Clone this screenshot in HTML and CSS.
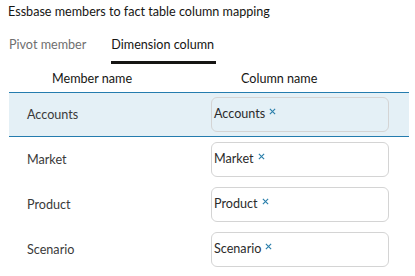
FILE: index.html
```html
<!DOCTYPE html>
<html lang="en">
<head>
  <meta charset="UTF-8" />
  <title>Column mapping</title>
  <link rel="stylesheet" href="styles.css">
</head>
<body>
  <h1 class="title">Essbase members to fact table column mapping</h1>

  <div class="tabs">
    <div class="tab">Pivot member</div>
    <div class="tab active">Dimension column</div>
  </div>

  <table class="mapping">
    <thead>
      <tr>
        <th class="col-member">Member name</th>
        <th class="col-column">Column name</th>
      </tr>
    </thead>
    <tbody>
      <tr class="selected">
        <td class="member">Accounts</td>
        <td><div class="chip-input"><span class="chip">Accounts <svg class="remove" viewBox="0 0 8 8"><path d="M1 1L7 7M7 1L1 7"/></svg></span></div></td>
      </tr>
      <tr>
        <td class="member">Market</td>
        <td><div class="chip-input"><span class="chip">Market <svg class="remove" viewBox="0 0 8 8"><path d="M1 1L7 7M7 1L1 7"/></svg></span></div></td>
      </tr>
      <tr>
        <td class="member">Product</td>
        <td><div class="chip-input"><span class="chip">Product <svg class="remove" viewBox="0 0 8 8"><path d="M1 1L7 7M7 1L1 7"/></svg></span></div></td>
      </tr>
      <tr>
        <td class="member">Scenario</td>
        <td><div class="chip-input"><span class="chip">Scenario <svg class="remove" viewBox="0 0 8 8"><path d="M1 1L7 7M7 1L1 7"/></svg></span></div></td>
      </tr>
    </tbody>
  </table>
</body>
</html>
```

FILE: styles.css
```css
body {
  margin: 0;
  padding: 0 6px 0 8px;
  font-family: Lato, "Noto Sans", sans-serif;
  font-size: 12.6px;
  color: #2b2b2b;
  background: #fff;
}

.title {
  font-size: 12.6px;
  font-weight: normal;
  color: #161513;
  margin: 0;
  padding-top: 3px;
  line-height: 18px;
}

.tabs {
  display: flex;
  gap: 26px;
  margin-top: 15px;
  padding-left: 1px;
}

.tab {
  color: #6f6f6f;
  line-height: 18px;
  padding-bottom: 7px;
  border-bottom: 3px solid transparent;
}

.tab.active {
  color: #161513;
  border-bottom-color: #161513;
  margin-left: -1px;
  padding-right: 2px;
}

.mapping {
  width: 400px;
  margin-left: 1px;
  border-collapse: collapse;
  margin-top: 2px;
}

.mapping th {
  font-weight: normal;
  text-align: left;
  color: #161513;
  height: 24px;
  padding: 0 0 2px;
  border-bottom: 1px solid #247cae;
}

.mapping th.col-member {
  width: 202px;
  padding-left: 43px;
  box-sizing: border-box;
}

.mapping th.col-column {
  padding-left: 30px;
}

.mapping td {
  height: 45px;
  padding: 0;
  box-sizing: border-box;
}

.mapping td.member {
  padding-left: 18px;
  color: #3a3a3a;
}

.mapping tr.selected td {
  background: #e4f0f6;
  height: 44px;
  border-bottom: 1px solid #247cae;
}

.chip-input {
  width: 178px;
  height: 35px;
  box-sizing: border-box;
  border: 1px solid #d4d4d4;
  border-radius: 6px;
  background: #fff;
  display: flex;
  align-items: center;
  padding-left: 2px;
}

.selected .chip-input {
  background: #e4f0f6;
}

.chip {
  color: #2b2b2b;
  display: flex;
  align-items: center;
  gap: 4px;
  margin-top: -2px;
}

.remove {
  width: 7px;
  height: 7px;
  margin-top: -4px;
  stroke: #2a7fab;
  stroke-width: 1.3;
  fill: none;
}
```
